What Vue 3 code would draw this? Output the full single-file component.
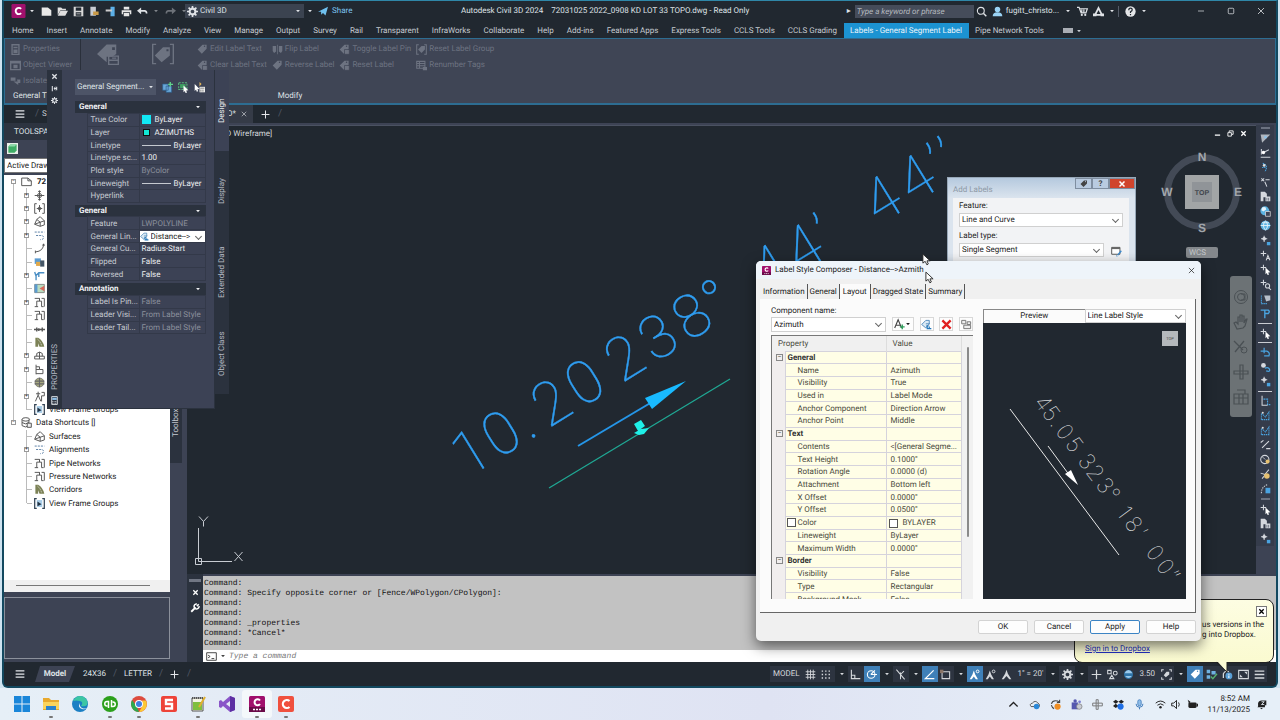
<script setup>
import { h } from 'vue'

const tag = '<path fill="currentColor" d="M1 8 8 1h6v6l-7 7zM12 3.2a1 1 0 1 0 0 .1z"/>'
const tree = (inner) => `<g fill="none" stroke="#555" stroke-width="1.4">${inner}</g>`
const blue = '#4aa3e0'
const icons = {
  fileNew: '<path fill="#e8e8e8" d="M1 2h9l5 4v8H1z"/>',
  open: '<path fill="#e0e0e0" d="M1 2h5l2 2h5v2H5l-4 7zM5 7h11l-4 7H1z"/>',
  save: '<path fill="#d8d8d8" fill-rule="evenodd" d="M1 1h14v14H1zM4 2v5h8V2zM4 9v5h8V9z"/><path fill="#d8d8d8" d="M5 11h6v1H5z"/>',
  saveAs: '<path fill="#c8ccd2" d="M2 1h8v13H2z"/><path fill="#c99a48" d="M6 8h8v5H6z"/>',
  cloud: '<path fill="#5db0e8" d="M8 1h6v14H8z"/><path fill="#ccc" d="M1 5h9v3H1z"/>',
  print: '<path fill="#e6e6e6" d="M4 1h8v4H4zM1 6h14v6h-2V9H3v3H1zM4 10h8v5H4z"/>',
  undo: '<path fill="none" stroke="currentColor" stroke-width="2.4" d="M4 7h7q3 0 3 4"/><path fill="currentColor" d="M0 7l6-5v10z"/>',
  redo: '<path fill="none" stroke="currentColor" stroke-width="2.4" d="M12 7H5q-3 0-3 4"/><path fill="currentColor" d="M16 7l-6-5v10z"/>',
  caret: '<path fill="currentColor" d="M3 5h10l-5 6z"/>',
  gear: '<circle cx="8" cy="8" r="4.2" fill="none" stroke="currentColor" stroke-width="3"/><path stroke="currentColor" stroke-width="2.4" d="M8 0v3M8 13v3M0 8h3M13 8h3M2.3 2.3l2 2M11.700 11.700l2 2M2.300 13.700l2-2M11.700 4.300l2-2"/>',
  plane: '<path fill="#6fc0ee" d="M0 9 16 1l-4 14-4-4-3 3v-5z"/>',
  search: '<circle cx="7" cy="7" r="5" fill="none" stroke="currentColor" stroke-width="1.600"/><path stroke="currentColor" stroke-width="2" d="m11 11 4 4"/>',
  user: '<circle cx="8" cy="5" r="4" fill="#9ad3f5"/><path fill="#9ad3f5" d="M1 15q0-6 7-6t7 6z"/>',
  cart: '<path fill="none" stroke="currentColor" stroke-width="1.800" d="M0 2h3l3 8h7l2-6H4M7 5v4M10 5v4"/><circle cx="7" cy="13" r="1.600" fill="currentColor"/><circle cx="12" cy="13" r="1.600" fill="currentColor"/>',
  adsk: '<path fill="none" stroke="currentColor" stroke-width="2.600" d="M3 13 8 3l5 10z"/><path fill="currentColor" d="M0 11h5v4H0zM11 11h5v4h-5z"/>',
  help: '<circle cx="8" cy="8" r="7.500" fill="#e4e6e8"/><path fill="none" stroke="#212830" stroke-width="1.800" d="M5.500 6q0-3 2.500-3t2.500 2.300Q10.500 7 8 8.500V10M8 11.500v2"/>',
  min: '<path stroke="currentColor" stroke-width="1.400" d="M2 8h12"/>',
  max: '<rect x="2.500" y="2.500" width="11" height="11" rx="2" fill="none" stroke="currentColor" stroke-width="1.500"/>',
  close: '<path stroke="currentColor" stroke-width="1.600" d="m2 2 12 12M14 2 2 14"/>',
  closeB: '<path stroke="currentColor" stroke-width="3" d="m3 3 10 10M13 3 3 13"/>',
  restore: '<path fill="none" stroke="currentColor" stroke-width="2" d="M5 5V2h9v8h-3M2 6h8v8H2z"/>',
  minB: '<path fill="currentColor" d="M2 10h12v3H2z"/>',
  tag,
  tagX: tag + '<path stroke="#3f4555" stroke-width="1" fill="currentColor" d="M8 8h7v7H8z"/>',
  tagFlip: '<path fill="currentColor" d="M1 3h5v8l-3 2-2-3zM10 3h5v7l-2 3-3-2zM7.500 1h1v14h-1z"/>',
  tagGroup: '<path fill="none" stroke="currentColor" stroke-width="1.500" d="M4 1H1v14h3M12 1h3v14h-3"/><path fill="currentColor" d="M3 8l5-5h5v5l-5 5z"/>',
  renum: '<path fill="none" stroke="currentColor" stroke-width="1.500" d="M1 2h12v10H1zM1 5h12M1 8.500h12M5 2v10"/><path fill="currentColor" d="M10 10h6v5h-6z"/>',
  props: '<path fill="none" stroke="currentColor" stroke-width="2" d="M3 1h10v14H3zM5 5h6"/><path fill="currentColor" d="M5 8h6v5H5z"/>',
  viewer: '<path fill="none" stroke="currentColor" stroke-width="2" d="M1 2h14v12H1z"/><path fill="currentColor" d="M1 2h14v3H1zM5 7h6v5H5z"/>',
  isolate: '<path fill="currentColor" d="M1 2h7v5H1zM5 8h7v5l-3-2zM10 5h5v5h-3z"/>',
  bigTag: '<path fill="currentColor" fill-rule="evenodd" d="M0 8 7 1h7v7l-3 2H7v4zM11 3v2h2V3z"/><path fill="none" stroke="currentColor" d="M8.500 9.500h7v6h-7zM8.500 12.500h7M11 11h3"/>',
  bigTag2: '<path fill="none" stroke="currentColor" d="M3 1H.5v14H3M13 1h2.500v14H13"/><path fill="currentColor" fill-rule="evenodd" d="M2 9l6-6h5v6l-6 5zM10.500 4.500v1.500H12V4.500z"/>',
  menu: '<path stroke="currentColor" stroke-width="2" d="M1 3h14M1 8h14M1 13h14"/>',
  plus: '<path stroke="currentColor" stroke-width="1.800" d="M8 1v14M1 8h14"/>',
  cube: '<path fill="#e8efe9" d="M0 0h16v16H0z"/><path fill="#3fae66" d="M2 5l3-3h9v9l-3 3H2z"/><path fill="#8fdcab" d="M2 5l3-3h9l-3 3z"/>',
  quickSel: '<path fill="#6aa7d8" stroke="#2c5d8c" d="M1 3h8v9H1zM6 6h8v9H6z"/><path stroke="#5fd38a" stroke-width="2" d="M12 0v7M9 3.500h7"/>',
  selObj: '<path fill="none" stroke="#58b97c" stroke-width="1.500" stroke-dasharray="3 1.500" d="M1 1h12v10H1z"/><path fill="#3f9f63" d="M3 3h8v6H3z"/><path fill="#fff" d="M8 5l7 7-3 .5 1 3-2 .5-1-3-2 2z"/>',
  pick: '<path fill="#fff" d="M1 3l7 7-3 .5 1 3-2 .5-1-3-2 2z"/><path fill="#e7b75a" d="M8 0l3 3-3 3z"/><path fill="#eee" d="M8 7h8v8H8z"/><path stroke="#555" d="M9 9h6M10 11v3M13 11v3"/>',
  pin: '<path stroke="currentColor" stroke-width="2.400" fill="none" d="M3 2v12M13 4v8M7 8h6"/><path fill="currentColor" d="M10 3l-4 5 4 5z"/>',
  calc: '<path fill="none" stroke="#dfe3e8" stroke-width="1.600" d="M3 1h10v14H3z"/><path fill="#8fc0e8" d="M4 3h8v4H4z"/><path stroke="#dfe3e8" stroke-width="1.500" stroke-dasharray="1.500 1" d="M4 10h8M4 13h8"/>',
  wrench: '<path fill="none" stroke="currentColor" stroke-width="3" d="M2 14l7-7"/><path fill="none" stroke="currentColor" stroke-width="2.500" d="M14 2l-3 3M14.500 5A4 4 0 1 1 11 1.500"/>',
  prompt: '<path fill="#fff" stroke="#444" stroke-width="1.400" d="M1 2.500h14v11H1z"/><path fill="none" stroke="#444" stroke-width="1.400" d="M3 6l3 2-3 2M8 11h4"/>',
  drawing: tree('<path fill="#fff" d="M1 3h9l5 4v7H1zM10 3v4h5"/>'),
  points: tree('<circle cx="8" cy="8" r="3"/><path d="M8 1v14M1 8h14M6 3l2-2 2 2M6 13l2 2 2-2"/>'),
  ptGroup: tree('<path d="M4 1H1v14h3M12 1h3v14h-3"/><circle cx="8" cy="8" r="2"/><path d="M8 3v10M4 8h8"/>'),
  surface: tree('<path d="M1 12 4 5l5-4 6 6v6l-6 2zM4 5l5 4 6-2M9 9v6M1 12l8-3"/>'),
  align: tree('<path stroke="#5b7fa5" stroke-dasharray="3 1.500" d="M1 3h14M3 8h7q4 0 4 3t-5 3"/>'),
  curve: tree('<path d="M14 1q0 11-12 12M12 3h4M2 11v4"/>'),
  plan: '<path fill="#5b9bd0" d="M1 2h9v8H1z"/><path fill="#e0a84a" d="M3 7h6v6H3z"/><path fill="#456" d="M9 5h6v9H9z"/>',
  assembly: '<path fill="none" stroke="#4a8ec4" stroke-width="2" d="M3 15V8l4-4h8M3 9 1 3M7 4v6"/>',
  map: '<path fill="#b9dcc0" stroke="#666" d="M1 2h14v12H1z"/><path fill="#d9685a" d="M8 8l7-4v8z"/><path fill="#5b9bd0" d="M1 2h4v12H1z"/>',
  pipe: tree('<path d="M1 2h7v4H4v8M8 2v4h3v8h3M11 2h4v12M1 14h5"/>'),
  link: tree('<path stroke-width="2" d="M0 8h16M4 5v6M12 5v6M7 6v4"/>'),
  corridor: '<path fill="#7c8256" d="M2 1h4q7 4 9 13H8L6 9v5H2z"/><path stroke="#eee" stroke-dasharray="2 1" d="M5 3q5 4 6 10" fill="none"/>',
  bridge: tree('<path d="M1 13h14V9H1zM4 9V5q4-4 8 0v4M8 3v10"/>'),
  section: tree('<path d="M3 1v14M3 4h5v4H3M8 8h5v6H3"/>'),
  globe: '<circle cx="8" cy="8" r="6.500" fill="#a8aa80" stroke="#666"/><path fill="none" stroke="#666" stroke-width="1.500" d="M1 6h14M1 10h14M8 1v14"/>',
  survey: tree('<path d="M2 15 6 6l4 9M6 6V1M3 4h6M11 2h4v5h-4v8"/>'),
  frame: '<path fill="#a9cde8" d="M4 3h8v10H4z"/><path fill="none" stroke="#345" stroke-width="1.800" d="M4 1H1v14h3M12 1h3v14h-3"/><path fill="#234" d="M5 5l6 4-6 3z"/>',
  db: tree('<ellipse cx="7" cy="3.500" rx="5.500" ry="2.500"/><path d="M1.500 3.500v9q5 4 10 0v-9M1.500 8q5 4 10 0"/><path fill="#eee" d="M9 9h6v6H9z"/>'),
  addText: '<path fill="none" stroke="#444" stroke-width="1.600" d="M1 13 6 1l5 12M3 9h6"/><path stroke="#2e9e5b" stroke-width="2" d="M12 8v7M8.500 11.500h7"/>',
  copyTag: '<path fill="#dbeaf5" stroke="#4a86b8" stroke-width="1.300" d="M1 8l6-6h5v5l-5 6zM7 7h6M8 10h4"/><path fill="none" stroke="#2277bb" stroke-width="1.800" d="M9 9v5h6M12 14v-3"/>',
  redX: '<path stroke="#e02020" stroke-width="3.400" d="m2 2 12 12M14 2 2 14"/>',
  order: '<path fill="#eee" stroke="#777" stroke-width="1.400" d="M1 2h6v5H1zM9 4h5v4H9zM4 9h10v5H4z"/>',
  picker: '<path fill="#fff" stroke="#555" stroke-width="1.400" d="M1 2h12v10H1z"/><path fill="#666" d="M1 2h12v2.500H1z"/><path stroke="#3e8acb" stroke-width="2" d="M15 7l-5 6M9 14l-1 1"/>',
  grid: '<path stroke="currentColor" stroke-width="1.300" d="M4 1v14M8 1v14M12 1v14M1 4h14M1 8h14M1 12h14"/>',
  dots: '<path stroke="currentColor" stroke-width="2" stroke-dasharray="2 3" d="M1 3h14M1 8h14M1 13h14"/>',
  ortho: '<path fill="none" stroke="currentColor" stroke-width="1.600" d="M2 1v13h13M2 9h5v5"/>',
  polar: '<circle cx="7.500" cy="8" r="5.500" fill="none" stroke="currentColor" stroke-width="1.600"/><path stroke="currentColor" stroke-width="1.600" d="M7 8h9M7 8l6-6"/>',
  iso: '<path stroke="currentColor" stroke-width="1.500" d="M2 1l12 14M8 5v10M8 8l5-5"/>',
  angle: '<path fill="none" stroke="currentColor" stroke-width="1.800" d="M14 2 2 14h13"/>',
  snap: '<path fill="none" stroke="currentColor" stroke-width="1.500" d="M3 4h11v10H3z"/><path fill="#8a7466" d="M0 1h5v5H0z"/>',
  person: '<path fill="currentColor" d="M8 1l2 6 5 8h-3l-4-5-4 5H1l5-8z"/>',
  personA: '<path fill="currentColor" d="M7 2l2 6 4 7h-3l-3-4-3 4H1l4-7z"/><circle cx="12.500" cy="3.500" r="2" fill="none" stroke="currentColor" stroke-width="1.400"/>',
  shapes: '<path fill="none" stroke="currentColor" stroke-width="1.500" d="M1 2h5v5H1zM4 14l3-5 3 5z"/><circle cx="12" cy="6" r="2.800" fill="none" stroke="currentColor" stroke-width="1.500"/>',
  water: '<circle cx="8" cy="8" r="6.500" fill="#2f74a8"/><path fill="#9cc9ea" d="M2 6q6-9 12 0zM3 10h10q-5 6-10 0z"/>',
  annot: '<path fill="none" stroke="currentColor" stroke-width="1.500" d="M4 1H1v3M12 1h3v3M4 15H1v-3M12 15h3v-3"/><path fill="currentColor" d="M4 9l4-5h4v4l-5 4z"/>',
  check: '<path fill="#6fb1e0" d="M1 1h5v5H1zM1 9h5v5H1zM8 3h6v5H8z"/><path fill="none" stroke="#58b070" stroke-width="2" d="M7 11l3 3 6-7"/>',
  info: '<path fill="none" stroke="currentColor" stroke-width="1.800" d="M2 13V7q3-6 8-3"/><circle cx="10" cy="10" r="5" fill="#5a9fd6"/><path stroke="#fff" stroke-width="1.500" d="M10 7v1.500M10 9.500V13"/>',
  screen: '<path fill="none" stroke="currentColor" stroke-width="1.600" d="M1 2h14v12H1z"/><path fill="currentColor" d="M9 4h4v4zM3 12V8l4 4z"/>',
  win: '<path fill="#1a86d9" d="M0 0h7.500v7.500H0zM8.500 0H16v7.500H8.500zM0 8.500h7.500V16H0zM8.500 8.500H16V16H8.500z"/>',
  folder: '<path fill="#e8a92e" d="M0 2h6l2 2h8v10H0z"/><path fill="#fbd45c" d="M0 6h16v7H0z"/><path fill="#2b82cc" d="M3 10h10v4H3z"/>',
  edge: '<circle cx="8" cy="8" r="8" fill="#1a7fc4"/><path fill="#3cc6a4" d="M1 5q4-7 11-4 5 4 3 8-2 2-6 1 3-4-1-5-4-1-7 0z"/><path fill="#e6f0f7" d="M8 7q-3 4 2 6 3 1 5-1-2 1-5 0-3-2-2-5z"/>',
  qb: '<circle cx="8" cy="8" r="8" fill="#2ca01c"/><path fill="none" stroke="#fff" stroke-width="1.500" d="M6.500 12V5.500H5a2.200 2.200 0 0 0 0 4.500h.5M9.500 4v6.500H11a2.200 2.200 0 0 0 0-4.500h-.5"/>',
  chrome: '<circle cx="8" cy="8" r="8" fill="#dd4b3e"/><path fill="#2da94f" d="M1.100 4 6 11l2 5A8 8 0 0 1 1.100 4z"/><path fill="#fcc934" d="M15 4.500A8 8 0 0 1 8 16l4-7-1-4.500z"/><circle cx="8" cy="8" r="4" fill="#fff"/><circle cx="8" cy="8" r="3" fill="#3f7fe0"/>',
  snagit: '<rect width="16" height="16" rx="2" fill="#ee4338"/><path fill="none" stroke="#fff" stroke-width="2.400" d="M12 4H5v4h6v4.500H4"/>',
  notepad: '<path fill="#f4f4e4" stroke="#555" d="M2 2h11v13H2z"/><path fill="#7fbf3d" d="M3 6h9v8H3z"/><path stroke="#e0b030" stroke-width="2" d="M15 1 9 11"/><path stroke="#555" stroke-dasharray="1 1" stroke-width="2" d="M2 2h11"/>',
  vs: '<path fill="#8a55c8" d="M11 0l5 2v12l-5 2L4 10l-2 2-2-1V5l2-1 2 2zM11 5 7 8l4 3z"/><path fill="#5d2fa3" d="M11 0l5 2v12l-5 2z"/>',
  civil: '<rect width="16" height="16" rx="1.500" fill="#a0106c"/><rect width="16" height="5" y="11" fill="#6a0a49"/><path fill="none" stroke="#fff" stroke-width="2" d="M11 4.500A3 3 0 1 0 11 8"/><path stroke="#fff" stroke-width="1.300" stroke-dasharray="2 1" d="M4 13.500h8"/>',
  civilC: '<rect width="16" height="16" rx="1.500" fill="#a0106c"/><path fill="none" stroke="#fff" stroke-width="2.200" d="M11 5.500A3.600 3.600 0 1 0 11 10.500"/>',
  camt: '<rect width="16" height="16" rx="2" fill="#f0503e"/><path fill="none" stroke="#fff" stroke-width="2.200" d="M11.500 5A4 4 0 1 0 11.500 11"/>',
  chevUp: '<path fill="none" stroke="#222" stroke-width="1.800" d="M2 11l6-6 6 6"/>',
  oned: '<path fill="#e8eef4" stroke="#555" stroke-width="1.400" d="M3 11q-3-4 2-5 4-5 8 0 3 1 2 5z"/><circle cx="11" cy="11" r="4" fill="#2b88d8"/>',
  sync: '<path fill="none" stroke="#444" stroke-width="1.600" d="M2 7q2-6 9-4l3 2M14 1v4h-4M2 9q1 4 4 5"/><circle cx="11" cy="11" r="4.500" fill="#ef8d22"/>',
  teams: '<path fill="#5558af" d="M1 5h9v10H1z"/><circle cx="6" cy="3" r="2.500" fill="#5558af"/><circle cx="12" cy="11" r="4" fill="#c9ccd4" stroke="#777"/><circle cx="12.500" cy="4" r="2" fill="#7b7fd0"/>',
  slack: '<path fill="none" stroke="#777" stroke-width="1.400" d="M6 1h3v5h6v4H9v5H6v-5H1V6h5zM6 6h3v4H6z"/>',
  dbox: '<path fill="#222" d="M4 1l4 3-4 3-4-3zM12 1l4 3-4 3-4-3zM4 7l4 3-4 3-4-3z"/><circle cx="11" cy="11" r="4.500" fill="#1f6fe5"/>',
  mic: '<rect x="5.500" y="1" width="5" height="9" rx="2.500" fill="#8fbde8" stroke="#2f6fb5"/><path fill="none" stroke="#2f6fb5" stroke-width="1.300" d="M3 7q0 5 5 5t5-5M8 12v3"/>',
  wifi: '<path fill="none" stroke="#222" stroke-width="1.400" d="M1 6q7-6 14 0M3.500 9q4.500-4 9 0"/><circle cx="8" cy="12" r="1.800" fill="#222"/>',
  sound: '<path fill="none" stroke="#222" stroke-width="1.400" d="M1 6h3l4-4v12l-4-4H1zM11 5q2 3 0 6"/>',
  batt: '<rect x="2" y="5" width="12" height="8" rx="2" fill="#222"/><path fill="#222" d="M1 1l4 3-2 3zM14 7h2v4h-2z"/>',
  bell: '<path fill="#222" d="M3 11V6q1-4 5-4h7v7h-2v3H2zM6 13h4l-2 2z"/><path stroke="#eaf2f9" stroke-width="1.200" fill="none" d="M8 4h4L8 8h4"/>',
  tri: '<path fill="#cfd3da" d="M1 2h14L3 14z" opacity=".8"/><circle cx="8" cy="6" r="2" fill="#8ec0e6"/>',
  ruler: '<path fill="none" stroke="#cfd3da" stroke-width="1.500" d="M1 15h14M2 3v8M5 8l8-4"/><circle cx="5" cy="8" r="2.500" fill="#fff"/>',
  arc: `<path fill="none" stroke="${blue}" stroke-width="1.600" stroke-dasharray="2 1" d="M4 2q9 3 3 12M3 8h5"/><circle cx="6" cy="5" r="2" fill="#ddd"/>`,
  pts: '<path stroke="#d5d8de" stroke-width="1.500" d="M2 2l4 4M6 2 2 6M8 4h6M7 7l3 7"/>',
  bldg: '<path fill="#d5d8de" d="M1 1h6l3 3v4h5v7H8V9H5v6H1z"/><path stroke="#4b5263" d="M10 10v4M12.500 10v4"/>',
  globe2: '<circle cx="7" cy="7" r="6.500" fill="#5cb3e2"/><path fill="#e5f3fb" d="M3 2q6-2 6 3L5 8 2 6z"/><path fill="#3e4557" stroke="#e5e5e5" d="M8 8h7v7H8z"/>',
  globe3: '<circle cx="8" cy="8" r="7" fill="#5cb3e2"/><path fill="none" stroke="#e5f3fb" stroke-width="1.300" d="M1 8h14M8 1q-6 7 0 14M8 1q6 7 0 14M3 4h10"/>',
  star: `<path fill="none" stroke="#d5d8de" stroke-width="1.500" d="M6 1v9M1.500 5.500h9M3.500 5.500 6 3l2.500 2.500L6 8z"/><path fill="${blue}" d="M10 10h5v5h-5z"/>`,
  starA: '<path fill="none" stroke="#d5d8de" stroke-width="1.500" d="M5 1v8M1 5h8M9 15l2.500-7 3 7M10 12.500h4"/>',
  starC: '<path fill="none" stroke="#d5d8de" stroke-width="1.500" d="M5 1v8M1 5h8"/><path fill="#fff" d="M8 5l7 7-3 .5 1 3-2 .5-1-3-2 2z"/>',
  starQ: '<path fill="none" stroke="#d5d8de" stroke-width="1.500" d="M5 1v8M1 5h8M13 13l3 3"/><circle cx="11" cy="10" r="3" fill="none" stroke="#d5d8de" stroke-width="1.500"/>',
  sheet: `<path fill="none" stroke="${blue}" stroke-width="1.500" stroke-dasharray="2 1" d="M2 2v13M2 14h8"/><path fill="#b8bfca" d="M6 2h9v7l-6 2z"/>`,
  pee: `<path fill="none" stroke="${blue}" stroke-width="2" d="M1 3h11q3 2 0 5H7M7 3v12"/>`,
  hook: `<path fill="none" stroke="${blue}" stroke-width="1.800" d="M1 6h9q5 2 3 7H6M6 1v8"/>`,
  hook2: `<circle cx="5" cy="5" r="3.500" fill="#d5d8de"/><path fill="none" stroke="${blue}" stroke-width="1.800" d="M7 9q6-2 7 2t-5 2"/>`,
  box: `<path fill="none" stroke="${blue}" stroke-width="1.600" stroke-dasharray="3 1" d="M5 6h6v8h4"/><path stroke="#d5d8de" stroke-width="1.500" d="M3 1v14h8" fill="none"/>`,
  zig: `<path fill="none" stroke="${blue}" stroke-width="1.500" stroke-dasharray="2 1" d="M2 14V5l6 5 5-7v11H2"/><circle cx="4" cy="4" r="1.500" fill="#ddd"/>`,
  pct: '<path stroke="#d5d8de" stroke-width="1.600" d="M3 13 13 3M1 5l4-3M9 14h6"/>',
  clock: '<circle cx="7" cy="8" r="6" fill="none" stroke="#d5d8de" stroke-width="1.500"/><circle cx="11" cy="11" r="3" fill="#e6c070"/><path stroke="#d5d8de" d="M3 4l5 4"/>',
  ball: '<path stroke="#d5d8de" stroke-width="1.500" fill="none" d="M1 6l6 2 6-7M3 14l5-6"/><circle cx="10" cy="10" r="4" fill="#e6c070"/>',
  arcBox: `<path fill="none" stroke="#d5d8de" stroke-width="1.500" stroke-dasharray="2 1.500" d="M2 15q0-10 10-13"/><path fill="${blue}" d="M8 7h7v8H8z"/>`,
  wheel: '<circle cx="8" cy="8" r="6.500" fill="none" stroke="currentColor"/><circle cx="8" cy="8" r="3.500" fill="none" stroke="currentColor"/><path stroke="currentColor" d="M8 5h4v6H8" fill="none"/>',
  hand: '<path fill="none" stroke="currentColor" stroke-width="1.200" d="M4 15 1 9l2-1 2 2V3l2 0v5-7h2v7-6h2v7l2-4h1l-2 7-2 2z"/>',
  zoomX: '<path stroke="currentColor" stroke-width="1.300" d="M1 2l9 9M11 2 2 13"/><circle cx="11" cy="11" r="3" fill="none" stroke="currentColor"/>',
  orbit: '<path fill="none" stroke="currentColor" stroke-width="1.200" d="M1 7h14v3H1zM7 1h3v14H7z"/>',
  film: '<path fill="none" stroke="currentColor" stroke-width="1.200" d="M1 5h14v10H1zM1 9h14M6 5v10M10 5v10M4 1h8v4"/>',
}

const Ico = (p) => h('svg', { viewBox: '0 0 16 16', 'aria-hidden': 'true', innerHTML: icons[p.n] })
Ico.props = ['n']

const menuTabs = ['Home', 'Insert', 'Annotate', 'Modify', 'Analyze', 'View', 'Manage', 'Output', 'Survey', 'Rail', 'Transparent', 'InfraWorks', 'Collaborate', 'Help', 'Add-ins', 'Featured Apps', 'Express Tools', 'CCLS Tools', 'CCLS Grading', 'Labels - General Segment Label', 'Pipe Network Tools']
const modifyCols = [
  [['tag', 'Edit Label Text'], ['tagX', 'Clear Label Text']],
  [['tagFlip', 'Flip Label'], ['tag', 'Reverse Label']],
  [['tagX', 'Toggle Label Pin'], ['tagX', 'Reset Label']],
  [['tagGroup', 'Reset Label Group'], ['renum', 'Renumber Tags']],
]
const treeRows = [
  { l: 0, e: '−', i: 'drawing', t: '72', b: true },
  { l: 1, e: '+', i: 'points' },
  { l: 1, e: '+', i: 'ptGroup' },
  { l: 1, e: '+', i: 'surface' },
  { l: 1, e: '+', i: 'align' },
  { l: 1, i: 'curve' },
  { l: 1, i: 'plan' },
  { l: 1, e: '+', i: 'assembly' },
  { l: 1, i: 'map' },
  { l: 1, e: '+', i: 'pipe' },
  { l: 1, i: 'pipe' },
  { l: 1, i: 'link' },
  { l: 1, i: 'corridor' },
  { l: 1, e: '+', i: 'bridge' },
  { l: 1, e: '+', i: 'section' },
  { l: 1, i: 'globe' },
  { l: 1, e: '+', i: 'survey' },
  { l: 1, i: 'frame', t: 'View Frame Groups', last: true },
  { l: 0, e: '−', i: 'db', t: 'Data Shortcuts []' },
  { l: 1, i: 'surface', t: 'Surfaces' },
  { l: 1, e: '+', i: 'align', t: 'Alignments' },
  { l: 1, i: 'pipe', t: 'Pipe Networks' },
  { l: 1, i: 'pipe', t: 'Pressure Networks' },
  { l: 1, i: 'corridor', t: 'Corridors' },
  { l: 1, i: 'frame', t: 'View Frame Groups', last: true },
]
const paletteGroups = [
  { name: 'General', rows: [
    { k: 'True Color', v: 'ByLayer', sw: 'big' },
    { k: 'Layer', v: 'AZIMUTHS', sw: 'small' },
    { k: 'Linetype', v: 'ByLayer', line: true },
    { k: 'Linetype sc...', v: '1.00' },
    { k: 'Plot style', v: 'ByColor', dim: true },
    { k: 'Lineweight', v: 'ByLayer', line: true },
    { k: 'Hyperlink', v: '' },
  ] },
  { name: 'General', rows: [
    { k: 'Feature', v: 'LWPOLYLINE', dim: true },
    { k: 'General Lin...', v: 'Distance-->', sel: true },
    { k: 'General Cu...', v: 'Radius-Start' },
    { k: 'Flipped', v: 'False' },
    { k: 'Reversed', v: 'False' },
  ] },
  { name: 'Annotation', rows: [
    { k: 'Label Is Pin...', v: 'False', dim: true },
    { k: 'Leader Visi...', v: 'From Label Style', dim: true },
    { k: 'Leader Tail...', v: 'From Label Style', dim: true },
  ] },
]
const styleRows = [
  { g: 'General' },
  { k: 'Name', v: 'Azimuth' },
  { k: 'Visibility', v: 'True' },
  { k: 'Used in', v: 'Label Mode' },
  { k: 'Anchor Component', v: 'Direction Arrow' },
  { k: 'Anchor Point', v: 'Middle' },
  { g: 'Text' },
  { k: 'Contents', v: '<[General Segme...' },
  { k: 'Text Height', v: '0.1000"' },
  { k: 'Rotation Angle', v: '0.0000 (d)' },
  { k: 'Attachment', v: 'Bottom left' },
  { k: 'X Offset', v: '0.0000"' },
  { k: 'Y Offset', v: '0.0500"' },
  { k: 'Color', v: 'BYLAYER', box: true },
  { k: 'Lineweight', v: 'ByLayer' },
  { k: 'Maximum Width', v: '0.0000"' },
  { g: 'Border' },
  { k: 'Visibility', v: 'False' },
  { k: 'Type', v: 'Rectangular' },
  { k: 'Background Mask', v: 'False' },
]
const log = ['Command:', 'Command: Specify opposite corner or [Fence/WPolygon/CPolygon]:', 'Command:', 'Command:', 'Command: _properties', 'Command: *Cancel*', 'Command:']
const sideTools = ['grip', 'tri', 'ruler', 'arc', 'pts', 'bldg', 'globe2', 'globe3', 'star', 'starA', 'starC', 'starQ', 'sheet', 'pee', 'line', 'starC', 'line', 'hook', 'hook2', 'star', 'line', 'box', 'zig', 'zig', 'pct', 'clock', 'ball', 'arcBox', 'grip', 'starC', 'bldg', 'star']
const status = [['grid'], ['dots'], ['caret'], ['ortho'], ['polar', 1], ['caret'], ['iso'], ['caret'], ['angle', 1], ['snap'], ['caret'], ['personA', 1], ['personA'], ['person'], ['text', '1" = 20\''], ['caret'], ['gear'], ['caret'], ['plus'], ['shapes'], ['water'], ['text', '3.50'], ['annot'], ['caret'], ['tag', 1], ['check'], ['info'], ['screen'], ['menu']]
const apps = [['win', 0], ['folder', 1], ['edge', 0], ['qb', 1], ['chrome', 1], ['snagit', 0], ['notepad', 1], ['vs', 0], ['civil', 1], ['camt', 1]]
const tray = ['chevUp', 'oned', 'sync', 'teams', 'slack', 'dbox', 'mic']
const tray2 = ['wifi', 'sound', 'batt']
</script>

<template>
  <div class="desk">
    <div class="app">
      <header class="title">
        <div class="qat">
          <button class="logo" aria-label="Application menu"><Ico n="civilC" /></button>
          <Ico n="caret" class="crt" />
          <button v-for="n in ['fileNew', 'open', 'save', 'saveAs', 'cloud', 'print', 'undo']" :key="n" class="tb" :aria-label="n"><Ico :n="n" /></button>
          <Ico n="caret" class="crt s" />
          <button class="tb off" aria-label="Redo"><Ico n="redo" /></button>
          <Ico n="caret" class="crt s" />
          <div class="ws"><Ico n="gear" /><select aria-label="Workspace"><option>Civil 3D</option></select><Ico n="caret" class="crt" /></div>
          <Ico n="caret" class="crt" />
          <button class="share"><Ico n="plane" />Share</button>
        </div>
        <div class="doc"><span>Autodesk Civil 3D 2024</span><span>72031025 2022_0908 KD LOT 33 TOPO.dwg - Read Only</span></div>
        <div class="acct">
          <span class="tri">▸</span>
          <input class="find" placeholder="Type a keyword or phrase" aria-label="Search help">
          <button class="tb" aria-label="Search"><Ico n="search" /></button>
          <button class="usr"><Ico n="user" />fugitt_christo...<Ico n="caret" class="crt" /></button>
          <button class="tb" aria-label="Store"><Ico n="cart" /></button>
          <button class="tb" aria-label="Autodesk"><Ico n="adsk" /></button>
          <Ico n="caret" class="crt" />
          <i class="sep"></i>
          <button class="tb" aria-label="Help"><Ico n="help" /></button>
          <Ico n="caret" class="crt" />
        </div>
        <div class="wbtn">
          <button aria-label="Minimize"><Ico n="min" /></button>
          <button aria-label="Maximize"><Ico n="max" /></button>
          <button aria-label="Close"><Ico n="close" /></button>
        </div>
      </header>

      <nav class="menu">
        <button v-for="t in menuTabs" :key="t" :class="{ on: t.startsWith('Labels') }">{{ t }}</button>
        <button class="mini" aria-label="Ribbon display"><i></i><Ico n="caret" class="crt" /></button>
      </nav>

      <section class="ribbon">
        <div class="panel tools">
          <div class="col"><button><Ico n="props" />Properties</button><button><Ico n="viewer" />Object Viewer</button><button><Ico n="isolate" />Isolate</button></div>
          <footer>General T</footer>
        </div>
        <div class="panel mod">
          <div class="cols">
            <button class="bt" aria-label="Add labels"><Ico n="bigTag" /></button>
            <button class="bt" aria-label="Edit label style"><Ico n="bigTag2" /></button>
            <div v-for="(c, i) in modifyCols" :key="i" class="col"><button v-for="b in c" :key="b[1]"><Ico :n="b[0]" />{{ b[1] }}</button></div>
          </div>
          <footer>Modify</footer>
        </div>
      </section>

      <nav class="files">
        <button class="ham" aria-label="Menu"><Ico n="menu" /></button><span class="sl">/</span>
        <button class="start">S</button>
        <div class="ftab"><span>O*</span><button aria-label="Close drawing"><Ico n="close" /></button></div>
        <button class="add" aria-label="New drawing"><Ico n="plus" /></button><span class="sl">/</span>
      </nav>

      <main class="work">
        <aside class="space">
          <h2>TOOLSPA</h2>
          <div class="strip"><Ico n="cube" /></div>
          <select class="view" aria-label="View"><option>Active Drawi</option></select>
          <div class="treebox">
            <ul class="tree">
              <li v-for="(r, i) in treeRows" :key="i" :class="['l' + r.l, { last: r.last }]">
                <i class="ex" :class="{ none: !r.e }">{{ r.e }}</i><Ico :n="r.i" /><span v-if="r.t" :class="{ b: r.b }">{{ r.t }}</span>
              </li>
            </ul>
            <div class="hs"><i></i></div>
          </div>
          <div class="preview"></div>
        </aside>
        <div class="sidetab"><span>Toolbox</span></div>
        <div class="center">
          <div class="canvasrow">
            <div class="canvas">
              <div class="vp">D Wireframe]</div>
              <svg class="cad" viewBox="187 126 1067 449" aria-label="Drawing">
                <g transform="translate(481 470) rotate(-31.6)" class="lbl">
                  <text x="1 36 63 95 134 181 220 260 290">10.20238°</text>
                  <text x="352 391 417">44’</text>
                  <text x="483 523 550 563">44’’</text>
                </g>
                <path stroke="#1fa894" stroke-width="1.300" d="M549 488 730 379" />
                <path stroke="#2596e8" stroke-width="2" d="M578 446 652 402" />
                <path fill="#19baff" d="M645 398 686 381 652 409z" />
                <path fill="#1ff0e8" d="M634 424l7-4 4 6-7 5zM634 433l7-4 8-1-5 6-5 1z" />
                <g stroke="#c8ccd2" fill="none"><path d="M198.500 528V561.500H232M195.500 558.500h6v6h-6zM199 516.500l4.500 5 4.500-5M203.500 521.500v5M234.500 552l8 9M242.500 552l-8 9" /></g>
              </svg>
              <div class="vpb"><Ico n="minB" /><Ico n="restore" /><Ico n="closeB" /></div>
              <svg class="compass" viewBox="0 0 84 84" aria-label="ViewCube">
                <circle cx="42" cy="43" r="34.500" fill="none" stroke="#434a56" stroke-width="7" />
                <g class="nesw"><text x="42" y="12">N</text><text x="78" y="47">E</text><text x="42" y="83">S</text><text x="7" y="47">W</text></g>
                <path fill="#a2a5a6" d="M25 26h34v34H25z" /><path fill="#909498" d="M32 33h20v20H32z" />
                <text class="top" x="42" y="46">TOP</text>
              </svg>
              <button class="wcs">WCS</button>
              <div class="navbar"><Ico n="wheel" /><Ico n="hand" /><Ico n="zoomX" /><Ico n="orbit" /><Ico n="film" /></div>
            </div>
            <div class="rail">
              <template v-for="(s, i) in sideTools" :key="i">
                <i v-if="s === 'line' || s === 'grip'" :class="s"></i>
                <button v-else :aria-label="s"><Ico :n="s" /></button>
              </template>
            </div>
          </div>
          <div class="cmd">
            <div class="cstrip"><i></i><Ico n="closeB" /><Ico n="wrench" class="wr" /></div>
            <div class="cmain">
              <pre>{{ log.join('\n') }}</pre>
              <div class="cin"><Ico n="prompt" /><Ico n="caret" class="crt" /><input placeholder="Type a command" aria-label="Command"></div>
            </div>
          </div>
        </div>
      </main>

      <footer class="status">
        <button class="ham" aria-label="Layouts"><Ico n="menu" /></button>
        <button class="lay on">Model</button><button class="lay">24X36</button><span class="sl">/</span>
        <button class="lay">LETTER</button><span class="sl">/</span>
        <button class="add" aria-label="New layout"><Ico n="plus" /></button><span class="sl">/</span>
        <div class="st">
          <button class="txt">MODEL</button>
          <template v-for="(s, i) in status" :key="i">
            <button v-if="s[0] === 'text'" class="txt">{{ s[1] }}</button>
            <Ico v-else-if="s[0] === 'caret'" n="caret" class="crt" />
            <button v-else class="sb" :class="{ on: s[1] }" :aria-label="s[0]"><Ico :n="s[0]" /></button>
          </template>
        </div>
      </footer>
    </div>

    <section class="palette">
      <div class="pbar"><Ico n="closeB" /><Ico n="pin" /><Ico n="gear" /><span>PROPERTIES</span><Ico n="calc" class="calc" /></div>
      <div class="pbody">
        <div class="ptop"><div class="psel"><select aria-label="Object type"><option>General Segment...</option></select><Ico n="caret" class="crt" /></div><Ico n="quickSel" /><Ico n="selObj" /><Ico n="pick" /></div>
        <table v-for="(g, i) in paletteGroups" :key="i">
          <colgroup><col class="c1"><col class="c2"><col></colgroup>
          <thead><tr><th colspan="3">{{ g.name }}<Ico n="caret" class="crt" /></th></tr></thead>
          <tbody>
            <tr v-for="r in g.rows" :key="r.k">
              <td class="gut"></td><th scope="row">{{ r.k }}</th>
              <td :class="{ dim: r.dim }">
                <div v-if="r.sel" class="dsel"><Ico n="copyTag" /><select aria-label="General line label style"><option>{{ r.v }}</option></select></div>
                <span v-else class="val"><i v-if="r.sw" class="sw" :class="r.sw"></i><i v-if="r.line" class="ln"></i>{{ r.v }}</span>
              </td>
            </tr>
          </tbody>
        </table>
      </div>
      <div class="ptabs"><button class="on">Design</button><button>Display</button><button>Extended Data</button><button>Object Class</button></div>
    </section>

    <aside class="balloon">
      <button aria-label="Dismiss"><Ico n="closeB" /></button>
      <p>us versions in the<br>g into Dropbox.</p>
      <a href="#">Sign in to Dropbox</a>
      <svg class="tail" viewBox="0 0 16 12" aria-hidden="true"><path fill="#fbfbd4" d="M2 0h10v11z" /><path fill="none" stroke="#222" d="M1 1l11 10V1" /></svg>
    </aside>

    <section class="addl">
      <header>Add Labels<div class="ab"><button aria-label="Pin"><Ico n="tag" /></button><button>?</button><button class="x" aria-label="Close"><Ico n="closeB" /></button></div></header>
      <div class="abody">
        <label for="feat">Feature:</label><div class="sel"><select id="feat"><option>Line and Curve</option></select></div>
        <label for="ltype">Label type:</label><div class="arow"><div class="sel"><select id="ltype"><option>Single Segment</option></select></div><button aria-label="Pick"><Ico n="picker" /></button></div>
      </div>
    </section>

    <section class="comp">
      <header><Ico n="civil" />Label Style Composer - Distance--&gt;Azmith<button aria-label="Close"><Ico n="close" /></button></header>
      <nav><button>Information</button><button>General</button><button class="on">Layout</button><button>Dragged State</button><button>Summary</button></nav>
      <div class="cbody">
        <div class="left">
          <label for="cname">Component name:</label>
          <div class="crow">
            <div class="sel"><select id="cname"><option>Azimuth</option></select></div>
            <button class="wide" aria-label="Add component"><Ico n="addText" /><Ico n="caret" class="crt" /></button>
            <button aria-label="Copy component"><Ico n="copyTag" /></button>
            <button aria-label="Delete component"><Ico n="redX" /></button>
            <button aria-label="Order"><Ico n="order" /></button>
          </div>
          <div class="gridbox">
            <table>
              <colgroup><col class="c1"><col class="c2"><col></colgroup>
              <thead><tr><th colspan="2">Property</th><th>Value</th></tr></thead>
              <tbody>
                <tr v-for="(r, i) in styleRows" :key="i">
                  <td class="gut"><i v-if="r.g">−</i></td>
                  <th v-if="r.g" scope="row" class="grp">{{ r.g }}</th><th v-else scope="row"><i v-if="r.box" class="sq"></i>{{ r.k }}</th>
                  <td><i v-if="r.box" class="sq in"></i>{{ r.v }}</td>
                </tr>
              </tbody>
            </table>
            <i class="vs"></i>
          </div>
        </div>
        <div class="right">
          <div class="rh"><span>Preview</span><div class="sel"><select aria-label="Preview style"><option>Line Label Style</option></select></div></div>
          <svg class="pv" viewBox="983 323 203 276" aria-label="Label preview">
            <path fill="#b4b8bc" d="M1162 331h16v15h-16z" /><text class="tiny" x="1170" y="340">TOP</text>
            <path stroke="#e8e8e8" d="M1010 409 1119 555M1048 446l22 30" />
            <path fill="#fff" d="M1065 474l6-4 7 15z" />
            <g transform="translate(1033 402) rotate(53.3)" class="plbl">
              <text x="7 20 30 43 59 80 94 110 122">45.05323°</text>
              <text x="143 158 170">18’</text>
              <text x="194 211 223">00”</text>
            </g>
          </svg>
        </div>
      </div>
      <footer><button>OK</button><button>Cancel</button><button class="def">Apply</button><button>Help</button></footer>
    </section>

    <svg class="ptr a" viewBox="0 0 10 14" aria-hidden="true"><path fill="#fff" stroke="#222" d="M1 1v10l2.500-2 2 4 1.500-1-1.500-3.500H9z" /></svg>
    <svg class="ptr b" viewBox="0 0 10 14" aria-hidden="true"><path fill="#fff" stroke="#222" d="M1 1v10l2.500-2 2 4 1.500-1-1.500-3.500H9z" /></svg>

    <footer class="task">
      <div class="apps"><button v-for="a in apps" :key="a[0]" :class="{ run: a[1], cur: a[0] === 'civil' }" :aria-label="a[0]"><Ico :n="a[0]" /></button></div>
      <div class="tray"><Ico v-for="t in tray" :key="t" :n="t" /></div>
      <div class="tray t2"><Ico v-for="t in tray2" :key="t" :n="t" /></div>
      <div class="clock"><span>8:52 AM</span><span>11/13/2025</span></div>
      <Ico n="bell" class="bell" />
    </footer>
  </div>
</template>

<style>
html, body { background: #dfe8f4; }
</style>
<style scoped>
* { box-sizing: border-box; }
.desk { position: relative; height: 100vh; display: flex; flex-direction: column; overflow: hidden; font: 8px/12px Roboto, "Open Sans", sans-serif; color: #c6cad1; background: #cfe3f0; text-rendering: geometricPrecision; }
button, input, select { font: inherit; color: inherit; background: none; border: 0; padding: 0; margin: 0; outline: 0; appearance: none; border-radius: 0; text-rendering: inherit; }
button { display: flex; align-items: center; justify-content: center; white-space: nowrap; flex: none; }
svg { display: block; flex: none; width: 11px; height: 11px; overflow: visible; }
i { font-style: normal; }
svg.crt { width: 6px; height: 6px; margin: 0 3px; }
svg.crt.s { opacity: .5; }
table { border-collapse: collapse; table-layout: fixed; }

.app { flex: 1; min-height: 0; margin: 0 2px; display: flex; flex-direction: column; background: #212830; border: 2px solid #134960; border-top: 1px solid #2f87a8; border-radius: 0 0 6px 6px; overflow: hidden; }
.title { display: flex; height: 20px; align-items: center; color: #dfe2e6; flex: none; }
.qat { display: flex; align-items: center; width: 457px; padding-left: 7px; }
.logo svg { width: 15px; height: 14px; }
.tb { width: 16px; }
.off { opacity: .4; }
.ws { display: flex; align-items: center; width: 119px; height: 14px; background: #3b4350; padding-left: 2px; gap: 2px; margin-left: -5px; }
.ws select { flex: 1; }
.share { gap: 4px; color: #7cc3ee; margin-left: 2px; }
.share svg { width: 10px; height: 10px; }
.doc { display: flex; gap: 8px; flex: 1; white-space: nowrap; }
.acct { display: flex; align-items: center; }
.tri { width: 8px; font-size: 8px; }
.find { width: 119px; height: 13px; background: #454c5a; padding: 0 2px; font-style: italic; }
.find::placeholder { color: #b4b8be; opacity: 1; }
.usr { gap: 3px; padding-left: 2px; }
.sep { width: 1px; height: 11px; background: #555c68; margin-right: 3px; }
.wbtn { display: flex; margin-left: 36px; }
.wbtn button { width: 30px; }
.wbtn svg { width: 8px; height: 8px; }

.menu { display: flex; height: 17px; padding-left: 2px; flex: none; }
.menu button { padding: 0 7px 0 6px; height: 15px; margin-top: 2px; }
.menu .on { background: #1c93d2; color: #e8f3fa; }
.menu .mini { margin-left: 6px; }
.mini i { width: 10px; height: 5px; background: #a9adb4; }
.ribbon { display: flex; height: 67px; background: #3f4555; border: 1px solid #2d6d92; border-bottom-width: 2px; flex: none; color: #6d7381; }
.panel { display: flex; flex-direction: column; justify-content: space-between; padding-top: 2px; }
.panel footer { color: #dfe2e6; line-height: 14px; text-align: center; }
.tools { width: 76px; border-right: 1px solid #2a303b; overflow: hidden; }
.tools footer { text-align: left; padding-left: 8px; white-space: nowrap; }
.col { display: flex; flex-direction: column; align-items: flex-start; }
.col button { height: 16px; gap: 2px; }
.tools .col { padding-left: 5px; }
.cols { display: flex; gap: 5px; padding-left: 16px; }
.bt { width: 22px; height: 26px; margin-right: 28px; }
.bt + .bt { margin-right: 18px; }
.bt svg { width: 22px; height: 22px; }
.mod footer { width: 418px; }
.files { display: flex; height: 18px; align-items: center; flex: none; }
.ham { width: 31px; color: #e4e6ea; }
.ham svg { width: 10px; height: 10px; }
.sl { color: #4f5663; width: 7px; font-size: 10px; }
.start { width: 40px; justify-content: flex-start; }
.ftab { display: flex; width: 171px; height: 18px; align-items: center; justify-content: flex-end; gap: 5px; background: #353b47; padding-right: 6px; color: #dfe2e6; }
.ftab svg { width: 6px; height: 6px; }
.add { width: 25px; color: #e4e6ea; }
.add svg { width: 9px; height: 9px; }

.work { flex: 1; min-height: 0; display: flex; background: #3d4354; }
.space { width: 166px; display: flex; flex-direction: column; min-height: 0; }
h2 { margin: 0; font: inherit; line-height: 18px; height: 17px; background: #2d3440; color: #dfe2e6; padding-left: 10px; }
.strip { height: 18px; padding: 3px; }
.view { height: 15px; background: #fff; color: #222; padding-left: 2px; border: 1px solid #777; }
.treebox { flex: 1; min-height: 0; margin-top: 2px; background: #fff; color: #222; display: flex; flex-direction: column; }
.tree { position: relative; list-style: none; margin: 0; padding: 0 0 0 7px; height: 335px; display: grid; grid-auto-rows: 1fr; }
.tree::before { content: ""; position: absolute; left: 9px; top: 8px; height: 240px; border-left: 1px solid #bbb; }
.tree li { position: relative; display: flex; align-items: center; gap: 3px; white-space: nowrap; min-height: 0; line-height: 11px; }
.tree .l1 { margin-left: 13px; }
.tree .l1::before { content: ""; position: absolute; left: 2px; top: 0; bottom: 0; border-left: 1px solid #bbb; }
.tree .last::before { bottom: 50%; }
.ex { position: relative; width: 5px; height: 5px; border: 1px solid #999; background: #fff; font-size: 5px; line-height: 3px; text-align: center; margin-right: 2px; }
.ex.none { border: 0; border-top: 1px solid #bbb; height: 1px; margin-left: 3px; width: 5px; margin-right: -1px; }
.tree span { margin-left: 1px; }
.tree .b { font-weight: 700; margin-left: 2px; }
.hs { margin-top: auto; height: 12px; background: #f0f0f0; padding: 5px 20px 0 12px; }
.hs i { display: block; height: 1px; background: #777; }
.preview { height: 62px; margin: 5px 0 3px; border: 1px solid #8b909b; }
.sidetab { width: 17px; padding-right: 3px; }
.sidetab span { display: flex; align-items: flex-end; justify-content: flex-start; height: 340px; background: #2b323e; writing-mode: vertical-rl; transform: rotate(180deg); padding-top: 26px; line-height: 12px; }
.center { flex: 1; min-width: 0; display: flex; flex-direction: column; }
.canvasrow { flex: 1; min-height: 0; display: flex; padding-top: 2px; }
.canvas { flex: 1; position: relative; background: #212830; border-top: 1px solid #4b5262; }
.vp { padding: 2px 0 0 39px; color: #d5d8dc; }
.cad { position: absolute; inset: 0; width: 1067px; height: 449px; }
.lbl text { font-family: Roboto, sans-serif; font-weight: 100; font-size: 60px; fill: #2f9df0; stroke: #2f9df0; stroke-width: .4; text-anchor: middle; }
.vpb { position: absolute; right: 9px; top: 4px; display: flex; gap: 6px; color: #fff; }
.vpb svg { width: 7px; height: 7px; }
.compass { position: absolute; right: 12px; top: 23px; width: 84px; height: 84px; }
.nesw { font: 700 12px "Liberation Sans", sans-serif; fill: #a2a6ab; text-anchor: middle; }
.top { font: 700 7px "Liberation Sans", sans-serif; fill: #41464d; text-anchor: middle; }
.wcs { position: absolute; right: 38px; top: 121px; width: 32px; height: 11px; background: #84888c; color: #c5c8cb; border-radius: 2px; justify-content: flex-start; padding-left: 3px; }
.navbar { position: absolute; right: 4px; top: 150px; width: 22px; height: 141px; background: #6c7275; border-radius: 3px; color: #4a5054; display: flex; flex-direction: column; align-items: center; justify-content: space-around; padding: 8px 0; }
.navbar svg { width: 16px; height: 16px; }
.rail { width: 18px; margin-right: 2px; display: flex; flex-direction: column; align-items: center; background: #353c4b; height: 421px; justify-content: space-between; padding: 2px 0; }
.rail .line { width: 14px; height: 1px; background: #c9ccd2; }
.rail .grip { width: 9px; height: 2px; background: #6b7280; }
.cmd { height: 88px; display: flex; }
.cstrip { width: 16px; background: #2b323e; display: flex; flex-direction: column; align-items: center; gap: 7px; padding-top: 5px; color: #fff; }
.cstrip i { width: 12px; height: 3px; background: #717784; }
.cstrip svg { width: 7px; height: 7px; }
.cstrip .wr { width: 10px; height: 10px; }
.cmain { flex: 1; display: flex; flex-direction: column; background: #c2c2c2; margin: 2px 0 0; }
pre { margin: 0; padding: 3px 2px 0 1px; flex: 1; color: #111; font: 8px/10px "Liberation Mono", monospace; }
.cin { height: 12px; background: #fff; display: flex; align-items: center; padding-left: 3px; color: #444; }
.cin input { flex: 1; font: italic 8px "Liberation Mono", monospace; }
.cin input::placeholder { color: #777; opacity: 1; }

.status { height: 24px; display: flex; align-items: center; flex: none; background: #212830; }
.lay { padding: 0 7px 0 8px; color: #dfe2e6; }
.lay.on { font-weight: 700; background: #3d4354; height: 16px; width: 40px; padding: 0; clip-path: polygon(5px 0, 100% 0, 34px 100%, 0 100%); }
.status .sl { width: 3px; }
.st { margin-left: auto; display: flex; align-items: center; height: 20px; color: #d5d8dc; padding-right: 9px; }
.sb { width: 16px; height: 16px; background: #2d3440; }
.sb.on { background: #3f80b8; color: #fff; }
.st svg { width: 11px; height: 11px; }
.st svg.crt { width: 6px; height: 6px; margin: 0 3px 0 4px; }
.txt { padding: 0 3px; height: 16px; background: #2d3440; }

.task { height: 32px; flex: none; display: flex; align-items: center; background: linear-gradient(90deg, #e6eff7, #dfe3f3 60%, #e6eff8 90%); color: #222; padding-left: 7px; }
.apps { display: grid; grid-template-columns: repeat(10, 1fr); width: 294px; margin-right: auto; }
.apps button { height: 28px; position: relative; }
.apps svg { width: 16px; height: 16px; }
.run::after { content: ""; position: absolute; bottom: 0; width: 4px; height: 2px; background: #777; border-radius: 1px; }
.cur { background: #f4f8fb; border-radius: 3px; }
.tray { display: flex; gap: 10px; margin-right: 10px; }
.t2 { gap: 5px; margin-right: 8px; }
.clock { display: flex; flex-direction: column; text-align: right; line-height: 11px; width: 44px; }
svg.bell { margin: 0 13px 0 6px; }

.palette { position: absolute; left: 47px; top: 70px; width: 182px; height: 339px; display: flex; }
.pbar { width: 15px; background: #2b323e; display: flex; flex-direction: column; align-items: center; gap: 5px; padding: 3px 0; color: #dfe2e6; }
.pbar svg { width: 7px; height: 7px; }
.pbar span { writing-mode: vertical-rl; transform: rotate(180deg); margin-top: auto; line-height: 12px; color: #b5bac3; }
.pbar .calc { width: 9px; height: 11px; }
.pbody { width: 153px; background: #3c4255; padding: 9px 9px 0 13px; border: 1px solid #2b323e; border-left: 0; border-top: 0; }
.ptop { display: flex; align-items: center; gap: 5px; margin-bottom: 6px; height: 16px; }
.psel { display: flex; align-items: center; background: #4d5467; width: 82px; height: 16px; padding-left: 2px; margin-right: 1px; color: #dfe2e6; }
.psel select { flex: 1; min-width: 0; }
.psel .crt { margin: 0 2px; }
.pbody table { width: 131px; margin-bottom: 2px; line-height: 11px; }
.pbody .c1 { width: 12px; }
.pbody .c2 { width: 52px; }
.pbody thead th { background: #2b323e; color: #f0f1f3; text-align: left; height: 12px; padding: 0 0 0 4px; }
.pbody thead .crt { float: right; margin: 3px 5px 0 0; }
.pbody tbody tr { height: 13px; }
.pbody tbody tr:nth-child(3n) { height: 12px; }
.pbody tbody th { font-weight: 400; text-align: left; padding: 0 0 0 3px; border: 1px solid #333949; white-space: nowrap; }
.pbody tbody td { padding: 0 0 0 2px; border: 1px solid #333949; color: #eceef0; white-space: nowrap; }
.pbody td.gut { border: 0; padding: 0; }
.pbody td.dim { color: #8b909c; }
.val { display: flex; align-items: center; }
.sw { width: 9px; height: 9px; background: #12e8f5; margin-right: 4px; flex: none; }
.sw.small { width: 7px; height: 7px; background: #12e8d5; border: 1px solid #111; margin: 0 5px 0 1px; }
.ln { width: 29px; height: 1px; background: #c5c9d0; margin-right: 3px; flex: none; }
.dsel { display: flex; background: #fff; color: #222; height: 11px; align-items: center; margin-left: -2px; position: relative; }
.dsel svg { width: 9px; height: 9px; }
.dsel select { flex: 1; min-width: 0; padding-left: 2px; height: 11px; }
.ptabs { width: 14px; height: 324px; display: flex; flex-direction: column; }
.ptabs button { writing-mode: vertical-rl; transform: rotate(180deg); height: 81px; width: 14px; background: #2b323e; color: #b5bac3; }
.ptabs .on { background: #3c4255; color: #eceef0; }

.sel { position: relative; background: #fff; border: 1px solid #d0d0d0; height: 15px; display: flex; min-width: 0; }
.sel select { width: 100%; padding-left: 2px; color: #222; }
.sel::after, .dsel::after { content: ""; position: absolute; right: 4px; top: 3px; width: 4px; height: 4px; border: solid #666; border-width: 0 1px 1px 0; transform: rotate(45deg); pointer-events: none; }

.addl { position: absolute; left: 947px; top: 177px; width: 189px; height: 90px; background: linear-gradient(#b5c9de, #dbe4ee 20px); padding: 0 6px 0 5px; border: 1px solid #98a8b8; color: #222; }
.addl header { display: flex; justify-content: space-between; height: 20px; color: #8e99a6; line-height: 24px; margin-right: -6px; }
.ab { display: flex; }
.ab button { width: 17px; height: 11px; border: 1px solid #7f8ea0; background: #b9cbe0; color: #444; font-weight: 700; }
.ab .x { width: 26px; background: #d0442c; color: #fff; }
.ab svg { width: 8px; height: 8px; }
.abody { background: #f2f3f5; height: 70px; padding: 1px 6px 0; display: flex; flex-direction: column; }
.abody label { line-height: 14px; }
.arow { display: flex; gap: 5px; }
.arow .sel { flex: 1; }
.arow button { width: 14px; }
.abody .sel { margin-bottom: 2px; height: 14px; }

.comp { position: absolute; left: 756px; top: 261px; width: 445px; height: 380px; display: flex; flex-direction: column; background: #f0f0f0; border-radius: 5px; color: #1c1c1c; box-shadow: 0 5px 14px rgba(0, 0, 0, .55); overflow: hidden; }
.comp > header { display: flex; align-items: center; gap: 4px; height: 18px; background: #eef4fa; padding: 0 6px; flex: none; }
.comp > header svg { width: 9px; height: 9px; }
.comp > header button { margin-left: auto; }
.comp > header button svg { width: 7px; height: 7px; }
.comp nav { display: flex; height: 20px; padding: 5px 0 0 5px; flex: none; }
.comp nav button { padding: 0 2px; height: 15px; border-right: 1px solid #555; }
.comp nav .on { background: #fbfbfb; padding: 0 3px; }
.cbody { flex: 1; min-height: 0; margin: 0 5px 0 4px; background: #fbfbfb; border-right: 1px solid #666; border-bottom: 1px solid #666; display: flex; gap: 10px; padding: 5px 9px 13px 11px; }
.left { width: 202px; display: flex; flex-direction: column; }
.left label { line-height: 13px; }
.crow { display: flex; justify-content: space-between; margin-bottom: 3px; }
.crow .sel { width: 115px; }
.crow button { width: 14px; height: 14px; border: 1px solid #d8d8d8; background: #fdfdfd; }
.crow .wide { width: 22px; }
.crow .wide .crt { margin: 0; }
.gridbox { flex: 1; min-height: 0; overflow: hidden; border: solid #777; border-width: 1px 0 0 1px; background: #f1f1f1; display: flex; align-items: flex-start; }
.gridbox table { width: 190px; height: 270px; color: #4a4a3c; line-height: 11px; }
.gridbox .c1 { width: 13px; }
.gridbox .c2 { width: 101px; }
.gridbox thead th { font-weight: 400; text-align: left; height: 15px; padding: 0 0 0 6px; background: #f0f0f0; border-right: 1px solid #ddd; }
.gridbox tbody th { font-weight: 400; text-align: left; padding: 0 0 0 12px; background: #fffee6; border: 1px solid #d5d3dc; position: relative; white-space: nowrap; }
.gridbox tbody th.grp { font-weight: 700; padding-left: 2px; color: #333; }
.gridbox tbody td { padding: 0 0 0 4px; background: #fffee6; border: 1px solid #d5d3dc; white-space: nowrap; }
.gridbox tbody td.gut { padding: 0; background: #f1eeee; border: 0; }
.gut i { display: block; width: 7px; height: 7px; border: 1px solid #888; line-height: 5px; font-size: 7px; text-align: center; margin-left: 4px; }
.sq { position: absolute; left: 1px; top: 1px; width: 9px; height: 9px; border: 1px solid #555; background: #fff; }
.sq.in { display: inline-block; position: static; vertical-align: middle; margin: 0 5px 0 -2px; }
.vs { width: 2px; height: 190px; background: #8a8a8a; border-radius: 1px; margin: 11px 0 0 5px; }
.right { flex: 1; margin-top: 5px; display: flex; flex-direction: column; }
.rh { display: grid; grid-template-columns: 1fr 1fr; height: 14px; }
.rh span { text-align: center; border-top: 1px solid #888; border-left: 1px solid #888; }
.rh .sel { height: 14px; }
.pv { width: 100%; height: auto; flex: 1; background: #212830; overflow: hidden; min-height: 0; }
.plbl text { font-family: Inter, sans-serif; font-weight: 100; font-size: 22px; fill: #f0f0f0; text-anchor: middle; }
.tiny { font-size: 4px; fill: #444; text-anchor: middle; }
.comp > footer { height: 28px; flex: none; display: flex; justify-content: flex-end; align-items: center; gap: 6px; padding-right: 5px; }
.comp > footer button { width: 50px; height: 14px; background: #fdfdfd; border: 1px solid #d3d3d3; border-radius: 2px; }
.comp > footer .def { border-color: #3c84c4; }

.balloon { position: absolute; left: 1074px; top: 599px; width: 200px; height: 64px; background: linear-gradient(#fdfde2, #fafad0); border: 1px solid #222; border-radius: 8px; color: #222; padding: 20px 9px 0 10px; }
.balloon button { position: absolute; right: 6px; top: 6px; width: 11px; height: 11px; border: 1px solid #777; background: #fff; color: #000; }
.balloon button svg { width: 7px; height: 7px; }
.balloon p { margin: 0 0 3px 117px; line-height: 10px; white-space: nowrap; }
.balloon a { color: #2430c0; }
.tail { position: absolute; left: 140px; top: 61px; width: 16px; height: 12px; }
.ptr { position: absolute; width: 9px; height: 13px; }
.ptr.a { left: 922px; top: 253px; }
.ptr.b { left: 925px; top: 271px; }
</style>
